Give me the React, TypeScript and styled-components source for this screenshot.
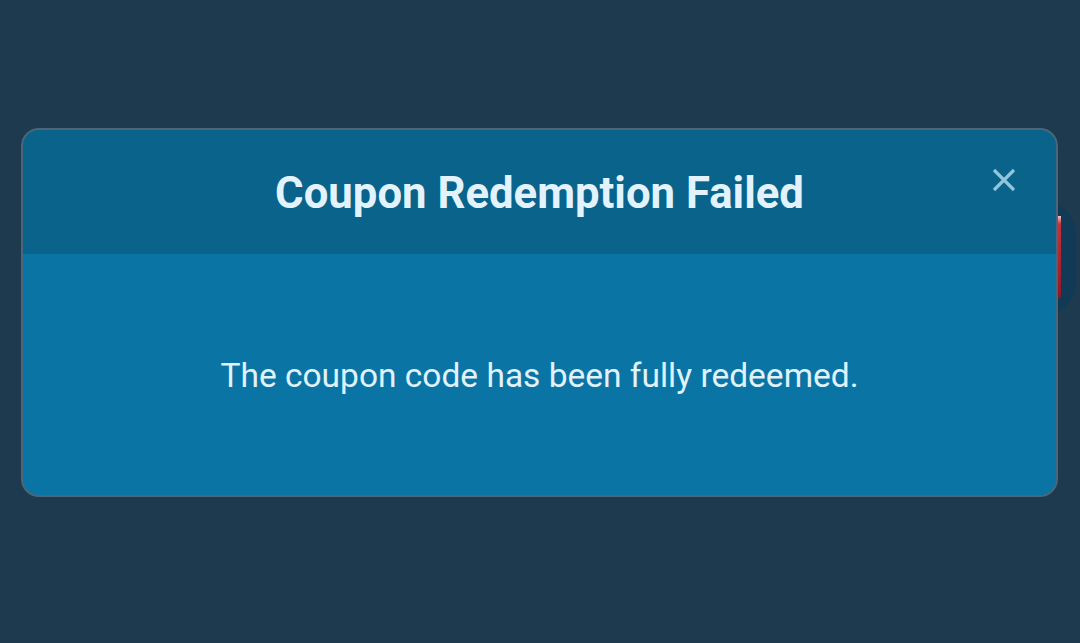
import React from 'react'
import styled, { createGlobalStyle } from 'styled-components';

const GlobalStyle = createGlobalStyle`
  html, body {
    margin: 0;
    padding: 0;
    background: #1d3a4e;
    font-family: Roboto, "Noto Sans", sans-serif;
  }
`;

const StyledPage = styled.div`
    position: relative;
    width: 1080px;
    height: 643px;
    overflow: hidden;
    box-sizing: border-box;
    padding-top: 128px;
    padding-left: 21px;
    background-color: #1d3a4e;
`;

// the card behind the dialog that peeks out on the right
const StyledPeek = styled.div`
    position: absolute;
    left: 1000px;
    top: 198px;
    width: 76px;
    height: 120px;
    border-radius: 0 38px 38px 0;
    background-color: #103a55;
`;

const StyledPeekBar = styled.div`
    position: absolute;
    left: 58px;
    top: 18px;
    width: 3px;
    height: 82px;
    background: linear-gradient(#f1c6cc 0, #c8303e 8px, #8a1a28 100%);
`;

const StyledModal = styled.div`
    position: relative;
    width: 1037px;
    height: 369px;
    box-sizing: border-box;
    border: 2px solid #4c6577;
    border-radius: 18px;
    overflow: hidden;
    display: flex;
    flex-direction: column;
    background-color: #0a75a4;
`;

const StyledHeader = styled.div`
    position: relative;
    height: 124px;
    flex-shrink: 0;
    display: flex;
    align-items: center;
    justify-content: center;
    background-color: #09638b;
`;

const StyledTitle = styled.h2`
    margin: 0;
    padding-top: 2px;
    font-weight: 700;
    font-size: 43.7px;
    color: #e3f3fd;
    letter-spacing: 0;
`;

const StyledClose = styled.button`
    position: absolute;
    right: 38px;
    top: 36px;
    width: 28px;
    height: 28px;
    padding: 0;
    border: none;
    background: none;
    display: flex;
    align-items: center;
    justify-content: center;
    cursor: pointer;
`;

const StyledBody = styled.div`
    flex: 1;
    display: flex;
    align-items: center;
    justify-content: center;
`;

const StyledMessage = styled.p`
    margin: 0;
    padding-top: 2px;
    font-size: 33.5px;
    font-weight: 400;
    color: #e0f2fb;
`;

const App: React.FC = () => {
  return (
    <>
      <GlobalStyle />
      <StyledPage>
        <StyledPeek>
          <StyledPeekBar />
        </StyledPeek>
        <StyledModal>
          <StyledHeader>
            <StyledTitle>Coupon Redemption Failed</StyledTitle>
            <StyledClose aria-label="Close">
              <svg width="24" height="24" viewBox="0 0 24 24">
                <path d="M2 2 L22 22 M22 2 L2 22" stroke="#8fc6dc" strokeWidth="3.2" strokeLinecap="butt" />
              </svg>
            </StyledClose>
          </StyledHeader>
          <StyledBody>
            <StyledMessage>The coupon code has been fully redeemed.</StyledMessage>
          </StyledBody>
        </StyledModal>
      </StyledPage>
    </>
  )
}

export default App
